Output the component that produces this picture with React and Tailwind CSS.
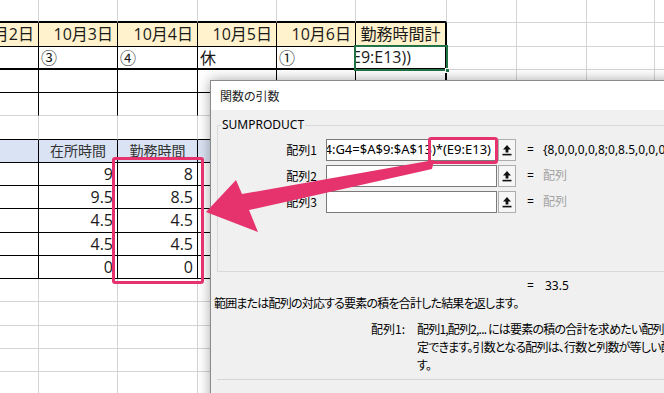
import React from 'react';

const widths = ['w-[39px]', 'w-[79px]', 'w-[80px]', 'w-[79px]', 'w-[79px]', 'w-[91px]', 'w-[70px]', 'w-[70px]', 'w-[68px]', 'w-[20px]'];

const BLACK_R = 'border-r border-r-black';
const BLACK_B = 'border-b border-b-black';

// sheet cells: rows of 10 columns, only the non-default ones are filled in
const rows = Array.from({ length: 17 }, () => Array.from({ length: 10 }, () => ({})));

for (let c = 0; c < 6; c++) {
  rows[0][c] = { b: 'border-b-2 border-b-black' };
  rows[1][c] = { r: BLACK_R, b: BLACK_B, bg: 'bg-[#fff2cc]' };
  rows[2][c] = { r: BLACK_R, b: 'border-b-2 border-b-black' };
  rows[3][c] = { r: BLACK_R, b: BLACK_B };
  rows[4][c] = { r: BLACK_R };
}
[1, 2, 3, 4].forEach((r) => (rows[r][5].r = 'border-r-2 border-r-black'));

for (let c = 0; c < 4; c++) {
  rows[5][c] = { b: BLACK_B };
  rows[6][c] = { r: BLACK_R, b: BLACK_B, bg: 'bg-[#dae3f3]' };
  for (let r = 7; r < 12; r++) rows[r][c] = { r: BLACK_R, b: BLACK_B };
}

const dates = ['10月2日', '10月3日', '10月4日', '10月5日', '10月6日'];
dates.forEach((d, c) => Object.assign(rows[1][c], { text: d, align: 'right' }));
Object.assign(rows[1][5], { text: '勤務時間計', align: 'center' });

['', '③', '④', '休', '①'].forEach((t, c) => Object.assign(rows[2][c], { text: t, align: 'left', cjk: true }));
Object.assign(rows[2][5], { text: 'E9:E13))', align: 'edit' });

Object.assign(rows[6][1], { text: '在所時間', align: 'center', small: true });
Object.assign(rows[6][2], { text: '勤務時間', align: 'center', small: true });

const hours = [
  ['9', '8'],
  ['9.5', '8.5'],
  ['4.5', '4.5'],
  ['4.5', '4.5'],
  ['0', '0'],
];
hours.forEach(([a, b], i) => {
  Object.assign(rows[7 + i][1], { text: a, align: 'right' });
  Object.assign(rows[7 + i][2], { text: b, align: 'right' });
});

const alignClass = {
  right: 'justify-end pr-[4px]',
  center: 'justify-center',
  left: 'justify-start pl-[2px]',
  edit: 'justify-start -indent-[4px]',
};

const Cell = ({ cell, width }) => (
  <div
    className={`shrink-0 h-full flex items-center overflow-hidden whitespace-nowrap ${width} ${
      cell.r ?? 'border-r border-r-[#d4d4d4]'
    } ${cell.b ?? 'border-b border-b-[#d4d4d4]'} ${cell.bg ?? ''} ${alignClass[cell.align] ?? ''}`}
  >
    {cell.text && (
      <span
        className={`${cell.small ? 'text-[14px] text-[#333]' : 'text-[16px]'} ${
          cell.cjk ? "font-['Noto_Sans_CJK_JP',sans-serif]" : ''
        } leading-none`}
      >
        {cell.text}
      </span>
    )}
  </div>
);

const UploadIcon = () => (
  <svg width="10" height="12" viewBox="0 0 10 12">
    <path d="M5 1 L1 5.5 H3.6 V8.5 H6.4 V5.5 H9 Z" fill="#111" />
    <rect x="0.5" y="9.8" width="9" height="1.6" fill="#111" />
  </svg>
);

const ArgRow = ({ label, value, result, muted }) => (
  <div className="flex h-[22px] items-center">
    <div className="w-[99px] text-right">{label}</div>
    <div className="ml-[9px] flex h-full w-[171px] items-center justify-end overflow-hidden whitespace-nowrap border border-[#7a7a7a] bg-white pr-[5px] font-['Noto_Sans',sans-serif] text-[13px]">
      {value}
    </div>
    <div className="ml-[1px] flex h-full w-[18px] items-center justify-center border border-[#adadad] bg-[#f6f6f6]">
      <UploadIcon />
    </div>
    <div className="ml-[11px] w-[7px] font-['Noto_Sans',sans-serif]">=</div>
    <div className={`ml-[9px] whitespace-nowrap font-['Noto_Sans','Noto_Sans_CJK_JP',sans-serif] ${muted ? 'text-[#a3a3a3]' : ''}`}>
      {result}
    </div>
  </div>
);

export default function App() {
  return (
    <div className="relative h-[393px] w-[664px] overflow-hidden bg-white font-['Open_Sans','Noto_Sans_CJK_JP',sans-serif] text-[#1a1a1a]">
      {/* sheet */}
      <div className="flex flex-col">
        {rows.map((row, r) => (
          <div key={r} className="flex h-[23.25px]">
            {row.map((cell, c) => (
              <Cell key={c} cell={cell} width={widths[c]} />
            ))}
          </div>
        ))}
      </div>

      {/* active cell */}
      <div className="absolute left-[354px] top-[45px] h-[26px] w-[94px] border-2 border-[#217346]" />
      <div className="absolute left-[445px] top-[68px] h-[5px] w-[5px] border border-white bg-[#217346]" />

      {/* 関数の引数 dialog */}
      <div className="absolute left-[210px] top-[80px] flex h-[330px] w-[470px] flex-col border border-[#8a8a8a] bg-[#f0f0f0] font-['Noto_Sans_CJK_JP',sans-serif] text-[12px] text-black shadow-[0_0_12px_rgba(0,0,0,0.35)] [font-feature-settings:'palt']">
        <div className="flex h-[29px] shrink-0 items-center bg-white pl-[9px] text-[#222]">関数の引数</div>
        <div className="flex flex-col px-[6px]">
          <fieldset className="mt-[7px] h-[155px] shrink-0 border border-[#d9d9d9] pt-[6px]">
            <legend className="ml-[3px] px-[1px] font-['Noto_Sans',sans-serif] leading-[16px]">SUMPRODUCT</legend>
            <div className="flex flex-col gap-[4px]">
              <ArgRow label="配列1" value="(B4:G4=$A$9:$A$13)*(E9:E13)" result="{8,0,0,0,0,8;0,8.5,0,0,0,0;0,0,4.5,0,0}" />
              <ArgRow label="配列2" value="" result="配列" muted />
              <ArgRow label="配列3" value="" result="配列" muted />
            </div>
          </fieldset>

          <div className="mt-[6px] flex h-[16px] shrink-0 items-center pl-[310px] font-['Noto_Sans',sans-serif]">
            <span className="w-[7px]">=</span>
            <span className="ml-[11px]">33.5</span>
          </div>

          <p className="-ml-[3px] h-[17px] shrink-0 whitespace-nowrap leading-[17px] tracking-[-0.8px]">範囲または配列の対応する要素の積を合計した結果を返します。</p>

          <div className="mt-[9px] flex shrink-0 leading-[18px]">
            <div className="w-[188px] shrink-0 text-right">配列1:</div>
            <div className="ml-[12px] whitespace-nowrap tracking-[-0.8px]">
              <div>配列1,配列2,... には要素の積の合計を求めたい配列を 1 から 255 個まで指</div>
              <div>定できます。引数となる配列は、行数と列数が等しい配列である必要がありま</div>
              <div>す。</div>
            </div>
          </div>

          <div className="mt-[5px] shrink-0 border-t border-[#d5d5d5]" />
        </div>
      </div>

      {/* highlight boxes */}
      <div className="absolute left-[112px] top-[157px] h-[127px] w-[92px] rounded-[3px] border-[3px] border-[#e6336e]" />
      <div className="absolute left-[428px] top-[137px] h-[27px] w-[70px] rounded-[3px] border-[3px] border-[#e6336e]" />

      {/* arrow */}
      <svg className="pointer-events-none absolute left-0 top-0" width="664" height="393">
        <polygon points="434,160 432,169 249,210 258,232 206,212 236,180 242,194" fill="#e6336e" />
      </svg>
    </div>
  );
}
